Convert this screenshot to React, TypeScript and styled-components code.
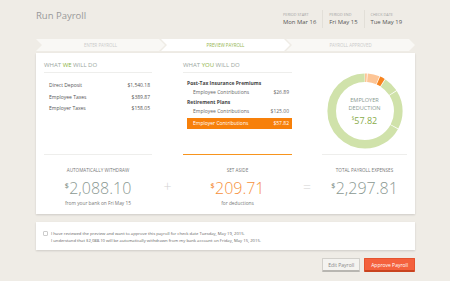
import styled, { createGlobalStyle } from 'styled-components';

const GlobalStyle = createGlobalStyle`
  body {
    margin: 0;
    background: #efece6;
    font-family: "Open Sans", "Liberation Sans", sans-serif;
    color: #555;
  }
`;

const segments = [
  { value: 26.89, color: '#fdc596' },
  { value: 125.0, color: '#fdc596' },
  { value: 57.82, color: '#f7841f' },
  { value: 158.05, color: '#d0e2aa' },
  { value: 389.87, color: '#d0e2aa' },
  { value: 1540.18, color: '#d0e2aa' },
];

function Donut() {
  const r = 33.3;
  const c = 2 * Math.PI * r;
  const total = segments.reduce((s, x) => s + x.value, 0);
  let start = 0;
  return (
    <svg width="76" height="76" viewBox="0 0 76 76">
      <g transform="rotate(-90 38 38)">
        {segments.map((s, i) => {
          const len = (s.value / total) * c;
          const el = (
            <circle
              key={i}
              cx="38"
              cy="38"
              r={r}
              fill="none"
              stroke={s.color}
              strokeWidth="8.6"
              strokeDasharray={`${Math.max(len - 0.7, 0.3)} ${c}`}
              strokeDashoffset={-start}
            />
          );
          start += len;
          return el;
        })}
      </g>
    </svg>
  );
}

function App() {
  return (
    <>
      <GlobalStyle />
      <Page>
        <Header>
          <Title>Run Payroll</Title>
          <Dates>
            <DateItem>
              <DateLabel>Period Start</DateLabel>
              <DateValue>Mon Mar 16</DateValue>
            </DateItem>
            <DateItem>
              <DateLabel>Period End</DateLabel>
              <DateValue>Fri May 15</DateValue>
            </DateItem>
            <DateItem>
              <DateLabel>Check Date</DateLabel>
              <DateValue>Tue May 19</DateValue>
            </DateItem>
          </Dates>
        </Header>

        <Steps>
          <Step>Enter Payroll</Step>
          <Step active>Preview Payroll</Step>
          <Step>Payroll Approved</Step>
        </Steps>

        <Card>
          <Grid>
            <Column>
              <Heading>What <Green>We</Green> Will Do</Heading>
              <LeftList>
                <LeftRow><span>Direct Deposit</span><span>$1,540.18</span></LeftRow>
                <LeftRow><span>Employee Taxes</span><span>$389.87</span></LeftRow>
                <LeftRow><span>Employer Taxes</span><span>$158.05</span></LeftRow>
              </LeftList>
            </Column>
            <span />
            <Column>
              <Heading>What <Green>You</Green> Will Do</Heading>
              <MidList>
                <GroupTitle>Post-Tax Insurance Premiums</GroupTitle>
                <MidRow><span>Employee Contributions</span><span>$26.89</span></MidRow>
                <GroupTitle>Retirement Plans</GroupTitle>
                <MidRow><span>Employee Contributions</span><span>$125.00</span></MidRow>
                <MidRow highlight><span>Employer Contributions</span><span>$57.82</span></MidRow>
              </MidList>
            </Column>
            <span />
            <DonutWrap>
              <Donut />
              <DonutCenter>
                <DonutLabel>Employer<br />Deduction</DonutLabel>
                <DonutValue><sup>$</sup>57.82</DonutValue>
              </DonutCenter>
            </DonutWrap>

            <Total>
              <TotalLabel>Automatically Withdraw</TotalLabel>
              <TotalValue><sup>$</sup>2,088.10</TotalValue>
              <TotalSub>from your bank on Fri May 15</TotalSub>
            </Total>
            <Operator>+</Operator>
            <Total accent>
              <TotalLabel>Set Aside</TotalLabel>
              <TotalValue accent><sup>$</sup>209.71</TotalValue>
              <TotalSub>for deductions</TotalSub>
            </Total>
            <Operator>=</Operator>
            <Total>
              <TotalLabel>Total Payroll Expenses</TotalLabel>
              <TotalValue><sup>$</sup>2,297.81</TotalValue>
              <TotalSub>&nbsp;</TotalSub>
            </Total>
          </Grid>
        </Card>

        <ConfirmCard>
          <CheckBox type="checkbox" />
          <ConfirmText>
            I have reviewed the preview and want to approve this payroll for check date Tuesday, May 19, 2015.
            <br />
            I understand that $2,088.10 will be automatically withdrawn from my bank account on Friday, May 15, 2015.
          </ConfirmText>
        </ConfirmCard>

        <Actions>
          <Button>Edit Payroll</Button>
          <Button primary>Approve Payroll</Button>
        </Actions>
      </Page>
    </>
  );
}

export default App;

const Page = styled.div`
width: 379px;
margin-left: 36px;
`;

const Header = styled.div`
display: flex;
justify-content: space-between;
align-items: flex-start;
height: 39px;
box-sizing: border-box;
padding-top: 10px;
`;

const Title = styled.h1`
margin: 0;
font-size: 9.5px;
font-weight: 400;
line-height: 12px;
color: #999;
`;

const Dates = styled.div`
display: flex;
height: 18px;
margin-right: 7px;
`;

const DateItem = styled.div`
display: flex;
flex-direction: column;
justify-content: center;
padding: 0 6px;
border-left: 1px solid #e2dfd8;
&:first-child {
  border-left: none;
  padding-left: 0;
}
`;

const DateLabel = styled.div`
font-size: 3.8px;
line-height: 6px;
text-transform: uppercase;
color: #a5a5a5;
`;

const DateValue = styled.div`
font-size: 5.9px;
line-height: 9px;
color: #555;
`;

const Steps = styled.div`
display: flex;
height: 12px;
`;

const Step = styled.div<{ active?: boolean }>`
flex: 1;
margin-left: -4px;
&:first-child {
  margin-left: 0;
}
background: ${(p) => (p.active ? '#ffffff' : '#f9f8f5')};
clip-path: polygon(0 0, calc(100% - 6px) 0, 100% 50%, calc(100% - 6px) 100%, 0 100%, 6px 50%);
display: flex;
align-items: center;
justify-content: center;
font-size: 4.4px;
text-transform: uppercase;
color: ${(p) => (p.active ? '#93b44d' : '#cacaca')};
`;

const Card = styled.div`
margin-top: 2px;
background: #fff;
box-shadow: 0 1px 2px rgba(0, 0, 0, 0.14);
padding: 7px 8px 8px;
`;

const Grid = styled.div`
display: grid;
grid-template-columns: 108px 31px 109px 30px 1fr;
grid-template-rows: 94px auto;
`;

const Column = styled.div`
display: flex;
flex-direction: column;
`;

const Heading = styled.div`
font-size: 6px;
font-weight: 400;
line-height: 10px;
text-transform: uppercase;
color: #9aa6a0;
padding-bottom: 2px;
border-bottom: 1px solid #eeeeec;
`;

const Green = styled.span`
color: #8cb13e;
`;

const LeftList = styled.div`
margin-top: 7px;
padding: 0 2px 0 5px;
`;

const LeftRow = styled.div`
display: flex;
justify-content: space-between;
font-size: 5px;
line-height: 11.7px;
color: #555;
`;

const MidList = styled.div`
margin-top: 6px;
padding: 0 3px 0 4px;
`;

const GroupTitle = styled.div`
font-size: 5px;
font-weight: 700;
line-height: 9.3px;
color: #444;
`;

const MidRow = styled.div<{ highlight?: boolean }>`
display: flex;
justify-content: space-between;
font-size: 5px;
line-height: ${(p) => (p.highlight ? '11px' : '9.3px')};
margin: ${(p) => (p.highlight ? '1.5px -3px 0 0' : '0')};
padding: 0 ${(p) => (p.highlight ? '3px' : '0')} 0 6px;
background: ${(p) => (p.highlight ? '#f7800a' : 'transparent')};
color: ${(p) => (p.highlight ? '#fff' : '#666')};
`;

const DonutWrap = styled.div`
position: relative;
display: flex;
justify-content: center;
padding-top: 13px;
`;

const DonutCenter = styled.div`
position: absolute;
top: 13px;
left: 0;
right: 0;
height: 76px;
display: flex;
flex-direction: column;
align-items: center;
justify-content: center;
text-align: center;
`;

const DonutLabel = styled.div`
font-size: 5.6px;
line-height: 8px;
text-transform: uppercase;
color: #8a9a92;
`;

const DonutValue = styled.div`
font-size: 9px;
line-height: 12px;
color: #8aac4a;
sup {
  font-size: 4.5px;
  vertical-align: 4px;
}
`;

const Total = styled.div<{ accent?: boolean }>`
border-top: 1px solid ${(p) => (p.accent ? '#f7941d' : '#eeeeec')};
padding-top: 12px;
text-align: center;
`;

const TotalLabel = styled.div`
font-size: 4.6px;
line-height: 6px;
text-transform: uppercase;
color: #777;
`;

const TotalValue = styled.div<{ accent?: boolean }>`
font-size: 16px;
font-weight: 300;
line-height: 20px;
margin-top: 3px;
color: ${(p) => (p.accent ? '#f6913c' : '#8b9992')};
sup {
  font-size: 7px;
  font-weight: 600;
  vertical-align: 6px;
  margin-right: 0.5px;
}
`;

const TotalSub = styled.div`
font-size: 4.8px;
line-height: 6px;
margin-top: 2px;
color: #777;
`;

const Operator = styled.div`
display: flex;
align-items: center;
justify-content: center;
padding-top: 12px;
font-size: 14px;
font-weight: 300;
color: #d2d2d2;
`;

const ConfirmCard = styled.div`
margin-top: 8px;
height: 28px;
box-sizing: border-box;
background: #fff;
box-shadow: 0 1px 2px rgba(0, 0, 0, 0.14);
display: flex;
align-items: flex-start;
padding: 8px 7px 0;
`;

const CheckBox = styled.input`
appearance: none;
width: 4.5px;
height: 4.5px;
margin: 1px 3.5px 0 0;
border: 1px solid #ccc;
border-radius: 1px;
background: #fff;
`;

const ConfirmText = styled.div`
font-size: 4.2px;
line-height: 7px;
color: #666;
`;

const Actions = styled.div`
display: flex;
justify-content: flex-end;
gap: 4px;
margin-top: 8px;
`;

const Button = styled.button<{ primary?: boolean }>`
height: 14px;
padding: 0 ${(p) => (p.primary ? '6px' : '5px')};
border: 1px solid ${(p) => (p.primary ? '#e4542f' : '#d2d0cb')};
border-bottom: 2px solid ${(p) => (p.primary ? '#c9431f' : '#b8b6b1')};
border-radius: 1px;
background: ${(p) => (p.primary ? '#f4613d' : '#f4f3f0')};
color: ${(p) => (p.primary ? '#fff' : '#888')};
font-family: "Open Sans", "Liberation Sans", sans-serif;
font-size: 5px;
cursor: pointer;
`;
